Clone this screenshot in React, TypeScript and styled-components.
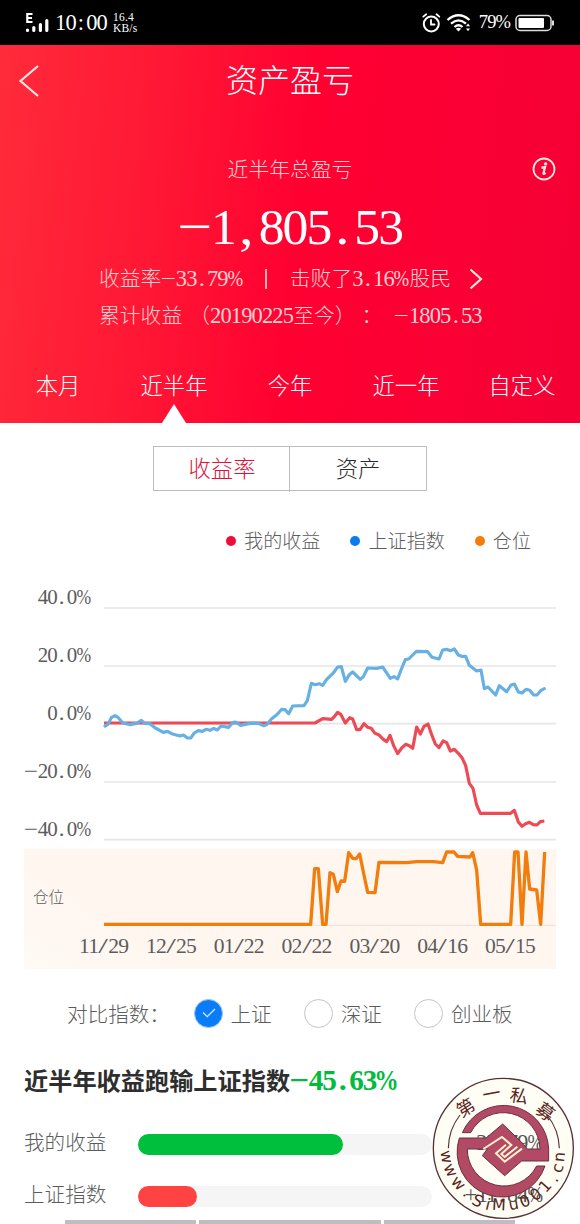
import React from "react";
import styled, { createGlobalStyle, css } from "styled-components";

const GlobalStyle = createGlobalStyle`
  * {
    box-sizing: border-box;
  }
  body {
    margin: 0;
    background: #fff;
    font-family: "Liberation Serif", "Noto Sans CJK SC", serif;
    font-weight: 300;
  }
`;

const Screen = styled.div`
  position: relative;
  width: 580px;
  height: 1224px;
  overflow: hidden;
  background: #fff;
  color: #5c5c5c;
  white-space: nowrap;
`;

/* ---------- numbers ---------- */

const Digits = styled.span`
  font-size: 1.08em;
  letter-spacing: -0.037em;
  line-height: 1;
`;

const Cell = styled.span<{ $width: number; $scale: number }>`
  display: inline-flex;
  justify-content: center;
  width: ${(p) => p.$width}em;
  line-height: 1;

  > span {
    font-size: 1.08em;
    transform: scaleX(${(p) => p.$scale});
  }
`;

// [cell width, horizontal scale]
const cells: Record<string, [number, number]> = {
  "−": [0.69, 1.2],
  "+": [0.6, 1],
  ".": [0.5, 1.1],
  ",": [0.5, 1.1],
  ":": [0.5, 1],
  "/": [0.5, 1.6],
  "%": [0.75, 0.84],
};

const Num = ({ value }: { value: string }) => (
  <>
    {value.split(/([−+.,:/%])/).map((part, i) => {
      if (!part) return null;
      const cell = cells[part];
      return cell ? (
        <Cell key={i} $width={cell[0]} $scale={cell[1]}>
          <span>{part}</span>
        </Cell>
      ) : (
        <Digits key={i}>{part}</Digits>
      );
    })}
  </>
);

/* ---------- status bar ---------- */

const StatusBar = styled.div`
  display: flex;
  align-items: center;
  justify-content: space-between;
  height: 45px;
  padding: 0 25px 0 25px;
  background: #000;
  color: #fff;
`;

const StatusGroup = styled.div`
  display: flex;
  align-items: center;
`;

const Clock = styled.span`
  margin-left: 6px;
  font-size: 20.8px;
  line-height: 24px;
`;

const Speed = styled.div`
  margin-left: 6px;
  font-size: 11.5px;
  line-height: 11px;
  letter-spacing: 0.2px;
`;

const Battery = styled.span`
  margin: 0 5px 0 7px;
  font-size: 18.5px;
  letter-spacing: -0.9px;
`;

const StatusIcon = styled.svg`
  display: block;
  flex: none;
`;

const WifiIcon = styled(StatusIcon)`
  margin-left: 5px;
`;

/* ---------- header ---------- */

const Header = styled.header`
  display: flex;
  flex-direction: column;
  height: 378px;
  background: linear-gradient(
    96deg,
    #ff2b3a 0%,
    #ff1534 30%,
    #ff0031 52%,
    #fb0034 75%,
    #f40035 100%
  );
  color: #fff;

  > * {
    flex-shrink: 0;
  }
`;

const NavBar = styled.div`
  display: grid;
  grid-template-columns: 60px 1fr 60px;
  align-items: center;
  height: 72px;
  padding-left: 18px;
  padding-right: 18px;
`;

const Title = styled.h1`
  margin: 0;
  font-size: 32px;
  font-weight: 300;
  line-height: 40px;
  text-align: center;
`;

const Caption = styled.div`
  display: grid;
  grid-template-columns: 60px 1fr 60px;
  align-items: center;
  justify-items: center;
  height: 30px;
  margin-top: 37px;
  font-size: 20.8px;
  color: #ffd0d0;
`;

const CaptionText = styled.span`
  grid-column: 2;
  padding-top: 2px;
  line-height: 28px;
`;

const InfoIcon = styled(StatusIcon)`
  margin-right: 12px;
`;

const Total = styled.div`
  height: 60px;
  margin-top: 15px;
  font-size: 47.8px;
  line-height: 58px;
  text-align: center;
`;

const StatRow = styled.div<{ $top: number }>`
  display: flex;
  align-items: center;
  height: 30px;
  margin-top: ${(p) => p.$top}px;
  padding-left: 99px;
  font-size: 20.8px;
  line-height: 30px;
  color: #ffd0d0;
`;

const Divider = styled.span`
  width: 1.5px;
  height: 20px;
  margin: 0 23px 0 22px;
  background: #ffb0b8;
`;

const Period = styled.span`
  margin-left: 7px;
`;

const Colon = styled.span`
  width: 20px;
  padding-left: 6px;
  margin-right: 19px;
`;

const Chevron = styled(StatusIcon)`
  margin-left: 18px;
`;

const Tabs = styled.nav`
  display: grid;
  grid-template-columns: repeat(5, 1fr);
  flex: 1;
  margin-top: 38px;
`;

const Tab = styled.div<{ $active?: boolean }>`
  display: flex;
  flex-direction: column;
  align-items: center;
  justify-content: space-between;
  font-size: 22.3px;
  line-height: 35px;

  ${(p) =>
    p.$active &&
    css`
      &::after {
        content: "";
        border: 12px solid transparent;
        border-top: 0;
        border-bottom: 19px solid #fff;
      }
    `}
`;

/* ---------- switch + legend ---------- */

const Switch = styled.div`
  display: grid;
  grid-template-columns: 1fr 1fr;
  width: 274px;
  height: 45px;
  margin: 23px auto 0;
  border: 1.5px solid #bdbdbd;
`;

const SwitchItem = styled.div<{ $active?: boolean }>`
  font-size: 22.3px;
  line-height: 45px;
  text-align: center;
  color: ${(p) => (p.$active ? "#e0103c" : "#2b2b2b")};

  & + & {
    margin-left: -1px;
    border-left: 1.5px solid #bdbdbd;
  }
`;

const Legend = styled.div`
  display: flex;
  justify-content: flex-end;
  gap: 30px;
  height: 30px;
  margin-top: 35px;
  padding-right: 49px;
  font-size: 19.1px;
  line-height: 29px;
`;

const LegendItem = styled.div<{ $color: string }>`
  display: flex;
  align-items: center;
  gap: 8px;

  &::before {
    content: "";
    width: 10px;
    height: 10px;
    border-radius: 50%;
    background: ${(p) => p.$color};
  }
`;

/* ---------- charts ---------- */

const ChartRow = styled.div`
  display: flex;
  height: 279px;
  margin-top: 14px;
`;

const YAxis = styled.div`
  width: 91px;
  margin-right: 13px;
  font-size: 19.4px;
  text-align: right;

  > div {
    height: 58px;
    line-height: 55px;
  }
`;

const Plot = styled.svg`
  display: block;
  overflow: visible;
  fill: none;
  stroke-linejoin: round;
`;

const PositionPanel = styled.div`
  width: 532px;
  height: 120px;
  margin-left: 24px;
  background: linear-gradient(35deg, #fffaf4 0%, #fff6f0 22%);
`;

const PositionRow = styled.div`
  display: flex;
  height: 81px;
`;

const PositionLabel = styled.div`
  width: 80px;
  padding-left: 9px;
  font-size: 15.5px;
  line-height: 97px;
`;

const Dates = styled.div`
  display: flex;
  gap: 17.8px;
  padding-left: 55px;
  font-size: 20px;
  line-height: 32px;
`;

/* ---------- index picker ---------- */

const Picker = styled.div`
  display: flex;
  align-items: center;
  height: 32px;
  margin-top: 30px;
  padding-left: 67px;
  font-size: 20.6px;
  line-height: 32px;
`;

const PickerLabel = styled.span`
  width: 127px;
`;

const Option = styled.div`
  display: flex;
  align-items: center;
  gap: 7.5px;
  margin-right: 32.5px;
`;

const Radio = styled.span<{ $checked?: boolean }>`
  display: grid;
  place-items: center;
  width: 29px;
  height: 29px;
  margin-top: -4px;
  border-radius: 50%;
  border: 1.5px solid ${(p) => (p.$checked ? "#9cc8f5" : "#c4c4c4")};
  background: ${(p) => (p.$checked ? "#0a7cf8" : "#fff")};
`;

/* ---------- comparison ---------- */

const Headline = styled.h2`
  display: flex;
  margin: 34px 0 0 24px;
  font-size: 24.2px;
  font-weight: 700;
  line-height: 34px;
  color: #2e2e2e;
`;

const Loss = styled.span`
  font-size: 27px;
  line-height: 32px;
  color: #00bb3c;
`;

const BarRow = styled.div<{ $top: number }>`
  display: flex;
  align-items: center;
  height: 30px;
  margin-top: ${(p) => p.$top}px;
  padding: 0 37px 0 24px;
  font-size: 20.6px;
  line-height: 30px;
`;

const BarLabel = styled.span`
  width: 114px;
`;

const Track = styled.div`
  width: 294px;
  height: 21px;
  margin-top: 2px;
  border-radius: 11px;
  background: #f5f5f5;
`;

const Fill = styled.div<{ $color: string }>`
  height: 100%;
  border-radius: 11px;
  background: ${(p) => p.$color};
`;

const BarValue = styled.span`
  flex: 1;
  text-align: right;
  color: #141c30;
`;

const BottomCards = styled.div`
  display: flex;
  gap: 3px;
  height: 4px;
  margin-top: 10px;
  padding-left: 65px;
`;

const CardEdge = styled.div<{ $width: number }>`
  width: ${(p) => p.$width}px;
  background: #bfbdc1;
`;

const StampSvg = styled.svg`
  position: absolute;
  left: 400px;
  top: 1050px;
`;

const indexLine =
  "3,468 12,463 22,443 33,437 43,443 56,458 78,464 98,460 112,451 122,460 138,461 154,474 178,487 191,484 203,491 228,498 238,495 250,504 260,504 271,489 283,482 295,484 306,478 318,481 329,475 340,480 351,468 374,472 386,458 395,456 410,466 438,460 463,460 478,467 488,464 503,446 520,433 533,418 543,419 554,431 566,408 600,407 610,392 622,340 633,344 645,341 656,346 668,328 688,309 701,291 712,290 724,334 736,314 746,306 769,328 778,320 791,294 818,295 836,291 859,325 870,320 881,327 891,300 904,269 914,267 937,244 971,245 984,262 1005,267 1016,240 1028,238 1040,242 1051,237 1063,255 1073,259 1085,259 1096,286 1118,303 1131,300 1141,356 1152,351 1175,375 1186,347 1208,365 1221,345 1231,342 1243,366 1254,369 1266,358 1277,361 1289,375 1299,375 1310,362 1321,356";

const profitLine =
  "0,459 633,459 656,446 683,448 691,440 701,427 711,434 724,459 737,443 746,447 758,479 768,479 780,461 791,472 802,475 813,490 824,494 838,508 848,515 858,496 869,527 881,551 893,534 905,523 916,527 926,535 938,471 949,492 960,469 972,462 983,494 994,522 1005,533 1017,513 1028,518 1039,543 1051,538 1063,550 1075,565 1085,587 1096,640 1107,655 1118,705 1129,730 1220,730 1231,721 1243,756 1254,769 1265,761 1276,757 1288,764 1299,765 1309,755 1321,753";

const positionLine =
  "0,226 620,226 632,59 643,59 656,226 666,226 678,71 688,76 700,128 711,96 722,97 734,11 746,28 756,29 767,15 780,78 791,130 813,131 825,40 908,41 938,38 988,38 1016,41 1028,9 1050,9 1061,22 1098,24 1106,11 1118,63 1130,226 1220,226 1232,9 1242,9 1254,226 1266,9 1277,120 1298,123 1310,226 1322,9";

const yLabels = ["40.0%", "20.0%", "0.0%", "−20.0%", "−40.0%"];
const gridLines = [114, 288, 461, 636, 809];
const dates = ["11/29", "12/25", "01/22", "02/22", "03/20", "04/16", "05/15"];
const tabs = ["本月", "近半年", "今年", "近一年", "自定义"];

// glyph, x, y, rotation
const stampTop: [string, number, number, number][] = [
  ["第", 197, 173, -32],
  ["一", 274, 131, -10],
  ["私", 357, 137, 10],
  ["募", 436, 185, 37],
];

const stampBottom: [string, number, number, number][] = [
  ["w", 138, 321, 80],
  ["w", 150, 362, 64],
  ["w", 174, 401, 47],
  [".", 200, 428, 38],
  ["S", 232, 455, 24],
  ["i", 263, 466, 14],
  ["M", 297, 466, 3],
  ["u", 341, 464, -10],
  ["0", 376, 456, -22],
  ["0", 408, 435, -36],
  ["1", 437, 410, -48],
  [".", 462, 386, -58],
  ["c", 474, 355, -70],
  ["n", 480, 321, -84],
];

const Stamp = () => (
  <StampSvg width="180" height="174" viewBox="0 0 540 522">
    <circle cx="310" cy="295" r="210" fill="#fffbd8" fillOpacity="0.25" stroke="#5a2f35" strokeWidth="4" />
    <path d="M145 295A166 166 0 0 1 180 195M441 195A166 166 0 0 1 478 295" fill="none" stroke="#5a2f35" strokeWidth="3.5" />
    <path
      d="M187 248A135 135 0 0 1 446 298V333H365L314 377L247 317L262 297H202A110 110 0 0 0 410 348H435A135 135 0 0 1 178 264H258L308 222L371 283L382 297H420A110 110 0 0 0 212 248Z"
      fill="#b24a64"
      stroke="#6b2f40"
      strokeWidth="3"
      strokeLinejoin="round"
    />
    <path
      d="M250 297L306 261L334 285L304 312L314 321L352 290M318 284L288 310L314 335L366 296"
      fill="none"
      stroke="#fff0d0"
      strokeWidth="6"
    />
    <g fill="#5a2420" textAnchor="middle" fontWeight="400">
      {stampTop.map(([glyph, x, y, r]) => (
        <text key={x} fontSize="54" fontFamily="Noto Sans CJK SC" transform={`translate(${x} ${y}) rotate(${r})`} y="20">
          {glyph}
        </text>
      ))}
      {stampBottom.map(([glyph, x, y, r]) => (
        <text key={x} fontSize="48" fontFamily="DejaVu Sans" transform={`translate(${x} ${y}) rotate(${r})`} y="14">
          {glyph}
        </text>
      ))}
    </g>
  </StampSvg>
);

const App = () => {
  return (
    <Screen>
      <GlobalStyle />
      <StatusBar>
        <StatusGroup>
          <StatusIcon width="24" height="22" viewBox="0 0 24 22">
            <path d="M7.5 2H2.3V10H7.5M2.3 6H7" fill="none" stroke="#fff" strokeWidth="2.2" />
            <path d="M2.5 18V18.5M8.8 15.5V18.5M15.4 12.5V18.5M21.8 8.5V18.5" stroke="#fff" strokeWidth="3.2" strokeLinecap="round" />
          </StatusIcon>
          <Clock>
            <Num value="10:00" />
          </Clock>
          <Speed>
            <div>16.4</div>
            <div>KB/s</div>
          </Speed>
        </StatusGroup>
        <StatusGroup>
          <StatusIcon width="19" height="20" viewBox="0 0 19 20" fill="none" stroke="#fff" strokeWidth="2" strokeLinecap="round">
            <circle cx="9.3" cy="11" r="7.5" />
            <path d="M9 7V11.5H12.5M1.3 3.6L4.2 1.3M14.5 1.3L17.3 3.6" strokeWidth="1.8" />
          </StatusIcon>
          <WifiIcon width="26" height="20" viewBox="0 0 26 20" fill="none" stroke="#fff" strokeWidth="2.3">
            <path d="M1.5 7Q12.5 -2.5 23.5 7M5 10.7Q12.5 4 20 10.7M8.5 14Q12.5 10.5 16.5 14" />
            <path d="M12.5 18.5L9.8 15.8Q12.5 13.5 15.2 15.8ZM20 13.3L22 10.5L24 13.3ZM20 15.5L22 18.3L24 15.5Z" fill="#fff" stroke="none" />
          </WifiIcon>
          <Battery>79%</Battery>
          <StatusIcon width="40" height="18" viewBox="0 0 40 18">
            <rect x="1" y="1.5" width="35" height="15" rx="4" fill="none" stroke="#ddd" strokeWidth="1.5" />
            <rect x="3.5" y="4" width="25.5" height="10" rx="1" fill="#fff" />
            <path d="M38 6.5V11.5" stroke="#ddd" strokeWidth="2" />
          </StatusIcon>
        </StatusGroup>
      </StatusBar>

      <Header>
        <NavBar>
          <StatusIcon width="22" height="34" viewBox="0 0 22 34" fill="none" stroke="#ffe8e0" strokeWidth="2.2">
            <path d="M20 2L2.5 17L20 32" />
          </StatusIcon>
          <Title>资产盈亏</Title>
        </NavBar>
        <Caption>
          <CaptionText>近半年总盈亏</CaptionText>
          <InfoIcon width="24" height="24" viewBox="0 0 24 24">
            <circle cx="12" cy="12" r="10.5" fill="none" stroke="#ffe8e0" strokeWidth="1.8" />
            <path d="M9.4 10.6L13 10L11.4 16.6Q11.6 17.4 13.6 15.8" fill="none" stroke="#ffe8e0" strokeWidth="2.2" />
            <circle cx="13.6" cy="6.9" r="1.7" fill="#ffe8e0" />
          </InfoIcon>
        </Caption>
        <Total>
          <Num value="−1,805.53" />
        </Total>
        <StatRow $top={5}>
          <span>
            收益率
            <Num value="−33.79%" />
          </span>
          <Divider />
          <span>
            击败了
            <Num value="3.16%" />
            股民
          </span>
          <Chevron width="14" height="22" viewBox="0 0 14 22" fill="none" stroke="#ffe8e0" strokeWidth="2.2">
            <path d="M1.5 1.5L12 11L1.5 20.5" />
          </Chevron>
        </StatRow>
        <StatRow $top={7}>
          <span>累计收益</span>
          <Period>
            （<Num value="20190225" />
            至今）
          </Period>
          <Colon>：</Colon>
          <span>
            <Num value="−1805.53" />
          </span>
        </StatRow>
        <Tabs>
          {tabs.map((tab) => (
            <Tab key={tab} $active={tab === "近半年"}>
              {tab}
            </Tab>
          ))}
        </Tabs>
      </Header>

      <Switch>
        <SwitchItem $active>收益率</SwitchItem>
        <SwitchItem>资产</SwitchItem>
      </Switch>

      <Legend>
        <LegendItem $color="#ef0d38">我的收益</LegendItem>
        <LegendItem $color="#0a7cf0">上证指数</LegendItem>
        <LegendItem $color="#f57c08">仓位</LegendItem>
      </Legend>

      <ChartRow>
        <YAxis>
          {yLabels.map((label) => (
            <div key={label}>
              <Num value={label} />
            </div>
          ))}
        </YAxis>
        <Plot width="452" height="279" viewBox="0 0 1356 837">
          {gridLines.map((y) => (
            <path key={y} d={`M0 ${y}H1356`} stroke="#e6e6e6" strokeWidth="5" />
          ))}
          <polyline points={profitLine} stroke="#ee4a55" strokeWidth="9.5" />
          <polyline points={indexLine} stroke="#66b0e4" strokeWidth="9.5" strokeLinecap="round" />
        </Plot>
      </ChartRow>

      <PositionPanel>
        <PositionRow>
          <PositionLabel>仓位</PositionLabel>
          <Plot width="452" height="81" viewBox="0 0 1356 243">
            <path d="M0 229H1356" stroke="#ece6e2" strokeWidth="4" />
            <polyline points={positionLine} stroke="#f27d0c" strokeWidth="10" />
          </Plot>
        </PositionRow>
        <Dates>
          {dates.map((date) => (
            <span key={date}>
              <Num value={date} />
            </span>
          ))}
        </Dates>
      </PositionPanel>

      <Picker>
        <PickerLabel>对比指数：</PickerLabel>
        <Option>
          <Radio $checked>
            <svg width="14" height="10" viewBox="0 0 14 10" fill="none" stroke="#d8ecff" strokeWidth="1.3">
              <path d="M1 4.5L5.2 8.7L13 1" />
            </svg>
          </Radio>
          上证
        </Option>
        <Option>
          <Radio />
          深证
        </Option>
        <Option>
          <Radio />
          创业板
        </Option>
      </Picker>

      <Headline>
        近半年收益跑输上证指数
        <Loss>
          <Num value="−45.63%" />
        </Loss>
      </Headline>

      <BarRow $top={29}>
        <BarLabel>我的收益</BarLabel>
        <Track>
          <Fill $color="#00bf3c" style={{ width: 205 }} />
        </Track>
        <BarValue>
          <Num value="−33.79%" />
        </BarValue>
      </BarRow>
      <BarRow $top={22}>
        <BarLabel>上证指数</BarLabel>
        <Track>
          <Fill $color="#ff4242" style={{ width: 59 }} />
        </Track>
        <BarValue>
          <Num value="+11.84%" />
        </BarValue>
      </BarRow>

      <BottomCards>
        <CardEdge $width={131} />
        <CardEdge $width={182} />
        <CardEdge $width={131} />
      </BottomCards>

      <Stamp />
    </Screen>
  );
};

export default App;
